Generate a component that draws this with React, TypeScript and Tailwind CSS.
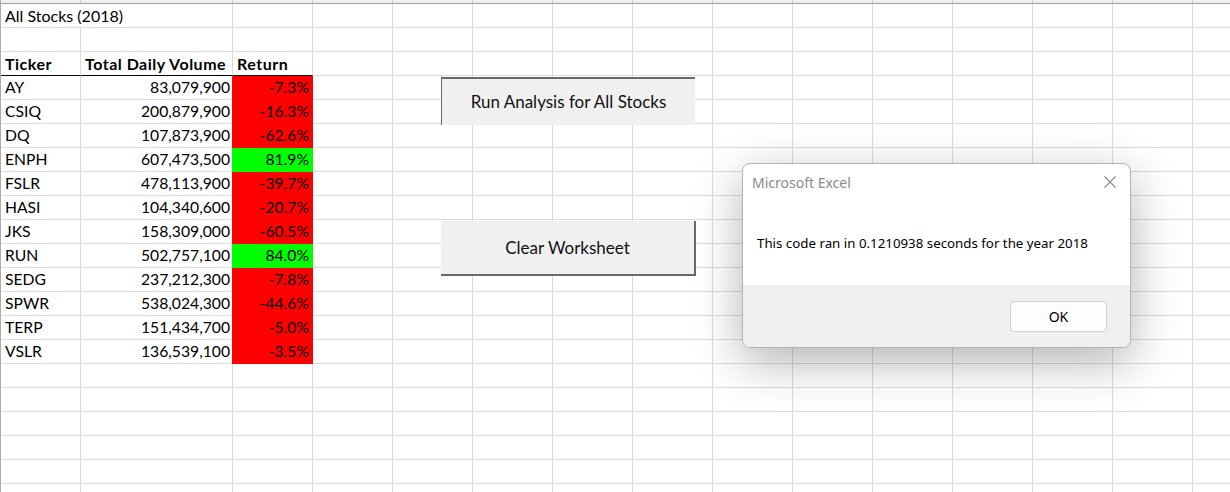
import React from "react";

const COLS = [80, 152, 80, 80, 80, 80, 80, 80, 80, 80, 80, 80, 80, 80, 80];

type Row = { t: string; v: string; r: string; up: boolean };
const DATA: Row[] = [
  { t: "AY", v: "83,079,900", r: "-7.3%", up: false },
  { t: "CSIQ", v: "200,879,900", r: "-16.3%", up: false },
  { t: "DQ", v: "107,873,900", r: "-62.6%", up: false },
  { t: "ENPH", v: "607,473,500", r: "81.9%", up: true },
  { t: "FSLR", v: "478,113,900", r: "-39.7%", up: false },
  { t: "HASI", v: "104,340,600", r: "-20.7%", up: false },
  { t: "JKS", v: "158,309,000", r: "-60.5%", up: false },
  { t: "RUN", v: "502,757,100", r: "84.0%", up: true },
  { t: "SEDG", v: "237,212,300", r: "-7.8%", up: false },
  { t: "SPWR", v: "538,024,300", r: "-44.6%", up: false },
  { t: "TERP", v: "151,434,700", r: "-5.0%", up: false },
  { t: "VSLR", v: "136,539,100", r: "-3.5%", up: false },
];

function EmptyCells({ from }: { from: number }) {
  return (
    <>
      {COLS.slice(from).map((w, i) => (
        <div
          key={i}
          className="shrink-0 h-full border-r border-[#dadada]"
          style={{ width: w }}
        />
      ))}
    </>
  );
}

function GridRow({ children }: { children: React.ReactNode }) {
  return <div className="flex h-[24px] shrink-0 border-b border-[#dadada]">{children}</div>;
}

export default function App() {
  const cellFont = { fontFamily: "Lato, 'Liberation Sans', sans-serif" };
  return (
    <div className="relative w-[1230px] h-[492px] overflow-hidden bg-white" style={cellFont}>
      <div className="flex flex-col border-l border-[#ababab] w-[1300px]">
        {/* top strip */}
        <div className="flex h-[4px] shrink-0 bg-[#f0f0f0] border-b border-[#a0a0a0]">
          {COLS.map((w, i) => (
            <div key={i} className="shrink-0 h-full border-r border-[#d0d0d0]" style={{ width: w }} />
          ))}
        </div>
        {/* row 1 */}
        <GridRow>
          <div className="shrink-0 w-[232px] flex items-center pl-[4px] text-[16px] text-black whitespace-nowrap border-r border-[#dadada]">
            All Stocks (2018)
          </div>
          <EmptyCells from={2} />
        </GridRow>
        {/* row 2 */}
        <GridRow>
          <EmptyCells from={0} />
        </GridRow>
        {/* row 3 header */}
        <div className="flex h-[24px] shrink-0">
          <div className="shrink-0 w-[80px] flex items-center pl-[4px] text-[16px] tracking-[0.5px] font-bold border-r border-b border-r-[#dadada] border-b-black">
            Ticker
          </div>
          <div className="shrink-0 w-[152px] flex items-center pl-[4px] text-[16px] tracking-[0.5px] font-bold whitespace-nowrap border-r border-b border-r-[#dadada] border-b-black">
            Total Daily Volume
          </div>
          <div className="shrink-0 w-[80px] flex items-center pl-[4px] text-[16px] tracking-[0.5px] font-bold border-r border-b border-r-[#dadada] border-b-black">
            Return
          </div>
          <div className="flex border-b border-[#dadada]">
            <EmptyCells from={3} />
          </div>
        </div>
        {/* data rows */}
        {DATA.map((d) => {
          const fill = d.up ? "bg-[#00ff00] border-[#00ff00]" : "bg-[#ff0000] border-[#ff0000]";
          return (
            <div key={d.t} className="flex h-[24px] shrink-0">
              <div className="shrink-0 w-[80px] flex items-center pl-[4px] text-[15.7px] border-r border-b border-[#dadada]">
                {d.t}
              </div>
              <div className="shrink-0 w-[152px] flex items-center justify-end pr-[3px] text-[15.7px] border-b border-[#dadada]">
                {d.v}
              </div>
              <div className={`shrink-0 w-[81px] -ml-px flex items-center justify-end pr-[3px] text-[15.7px] border-r border-b ${fill}`}>
                {d.r}
              </div>
              <div className="flex border-b border-[#dadada]">
                <EmptyCells from={3} />
              </div>
            </div>
          );
        })}
        {/* empty rows */}
        {[0, 1, 2, 3, 4, 5].map((i) => (
          <GridRow key={i}>
            <EmptyCells from={0} />
          </GridRow>
        ))}
      </div>

      {/* Run Analysis button */}
      <div className="absolute left-[441px] top-[77px] w-[254px] h-[48px] bg-[#f0f0f0] border-t-2 border-l border-[#696969] flex items-center justify-center text-[17px] text-[#111]">
        Run Analysis for All Stocks
      </div>

      {/* Clear Worksheet button */}
      <div className="absolute left-[441px] top-[221px] w-[255px] h-[55px] bg-[#f0f0f0] border-r-2 border-b-2 border-[#696969] flex items-center justify-center text-[17px] text-[#111]">
        Clear Worksheet
      </div>

      {/* Dialog */}
      <div
        className="absolute left-[742px] top-[163px] w-[389px] h-[185px] rounded-[8px] border border-[#b3b3b3] bg-white overflow-hidden flex flex-col shadow-[0_14px_48px_rgba(0,0,0,0.3)]"
        style={{ fontFamily: "'Noto Sans', 'Open Sans', sans-serif" }}
      >
        <div className="flex-1 flex flex-col">
          <div className="flex items-center justify-between h-[36px] pl-[9px] pr-[14px]">
            <span className="text-[14px] text-[#8a8a8a]">Microsoft Excel</span>
            <svg width="12" height="12" viewBox="0 0 12 12">
              <path d="M0.5 0.5 L11.5 11.5 M11.5 0.5 L0.5 11.5" stroke="#8a8a8a" strokeWidth="1.1" fill="none" />
            </svg>
          </div>
          <div className="pl-[14px] pt-[34px] text-[13.3px] text-black">
            This code ran in 0.1210938 seconds for the year 2018
          </div>
        </div>
        <div className="h-[62px] bg-[#f0f0f0] flex items-start justify-end pt-[16px] pr-[23px]">
          <div className="w-[97px] h-[31px] rounded-[4px] border border-[#d0d0d0] bg-[#fdfdfd] flex items-center justify-center text-[14px] text-black">
            OK
          </div>
        </div>
      </div>
    </div>
  );
}
